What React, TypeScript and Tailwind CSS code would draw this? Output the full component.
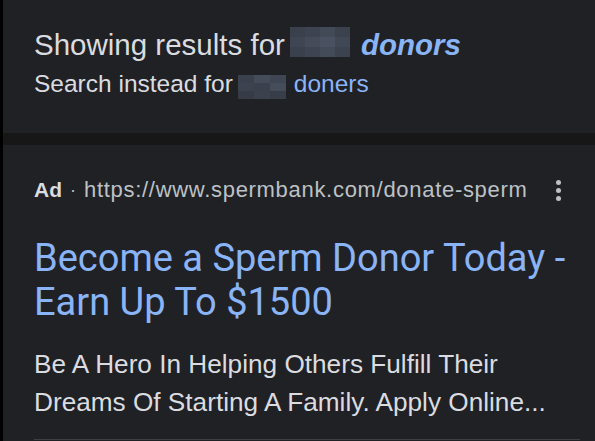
import React from "react";

const sans = "font-['Liberation_Sans',Arial,sans-serif]";

function Redacted({ cells, cell }: { cells: string[][]; cell: string }) {
  // pixelated blur block
  return (
    <span className="flex flex-col">
      {cells.map((row, r) => (
        <span key={r} className="flex">
          {row.map((c, i) => (
            <span key={i} className={cell} style={{ backgroundColor: c }} />
          ))}
        </span>
      ))}
    </span>
  );
}

export default function App() {
  return (
    <div className={`flex h-[441px] w-[595px] overflow-hidden bg-black ${sans}`}>
      <div className="ml-[3px] flex flex-1 flex-col bg-[#202124]">
        {/* Spelling notice */}
        <div className="h-[133px] pl-[31px] pt-[27px]">
          <div className="flex h-[36px] items-start text-[29.5px] leading-[36px] text-[#dadce0]">
            <span>Showing results for</span>
            <span className="ml-[5px] flex">
              <Redacted
                cell="h-[10px] w-[15px]"
                cells={[
                  ["#3a404c", "#3d4350", "#424957", "#3b414d"],
                  ["#3f4552", "#444b59", "#4a5261", "#404755"],
                  ["#3a404c", "#3e4451", "#434a58", "#3c424e"],
                ]}
              />
            </span>
            <span className="ml-[11px] font-bold italic text-[#8ab4f8]">donors</span>
          </div>
          <div className="mt-[6px] flex h-[30px] items-start text-[24.5px] leading-[30px] text-[#dadce0]">
            <span>Search instead for</span>
            <span className="ml-[5px] mt-[6px] flex">
              <Redacted
                cell="h-[8px] w-[16px]"
                cells={[
                  ["#3a404c", "#444b59", "#3f4552"],
                  ["#3c424e", "#3a404c", "#454c5a"],
                  ["#363b46", "#3b414d", "#383e49"],
                ]}
              />
            </span>
            <span className="ml-[8px] text-[#8ab4f8]">doners</span>
          </div>
        </div>

        {/* Separator */}
        <div className="h-[12px] bg-[#171717]" />

        {/* Ad card */}
        <div className="flex-1 pl-[31px] pr-[15px] pt-[31px]">
          <div className="flex items-center text-[#bdc1c6]">
            <div className="flex flex-1 items-center leading-[28px]">
              <span className="text-[21px] font-bold text-[#dadce0]">Ad</span>
              <span className="mx-[8px] text-[18px]">·</span>
              <span className="text-[22px] tracking-[0.7px]">https://www.spermbank.com/donate-sperm</span>
            </div>
            <div className="mr-[19px] flex flex-col gap-[3px]">
              <span className="h-[5px] w-[5px] rounded-full bg-[#bdc1c6]" />
              <span className="h-[5px] w-[5px] rounded-full bg-[#bdc1c6]" />
              <span className="h-[5px] w-[5px] rounded-full bg-[#bdc1c6]" />
            </div>
          </div>

          <div className="mt-[32px] font-['Roboto',sans-serif] text-[38px] leading-[44px] text-[#8ab4f8]">
            Become a Sperm Donor Today -<br />
            Earn Up To $1500
          </div>

          <div className="mt-[21px] border-b border-[#3c4043] pb-[18px] text-[26.2px] leading-[38px] text-[#dadce0]">
            Be A Hero In Helping Others Fulfill Their
            <br />
            Dreams Of Starting A Family. Apply Online...
          </div>
        </div>
      </div>
    </div>
  );
}
